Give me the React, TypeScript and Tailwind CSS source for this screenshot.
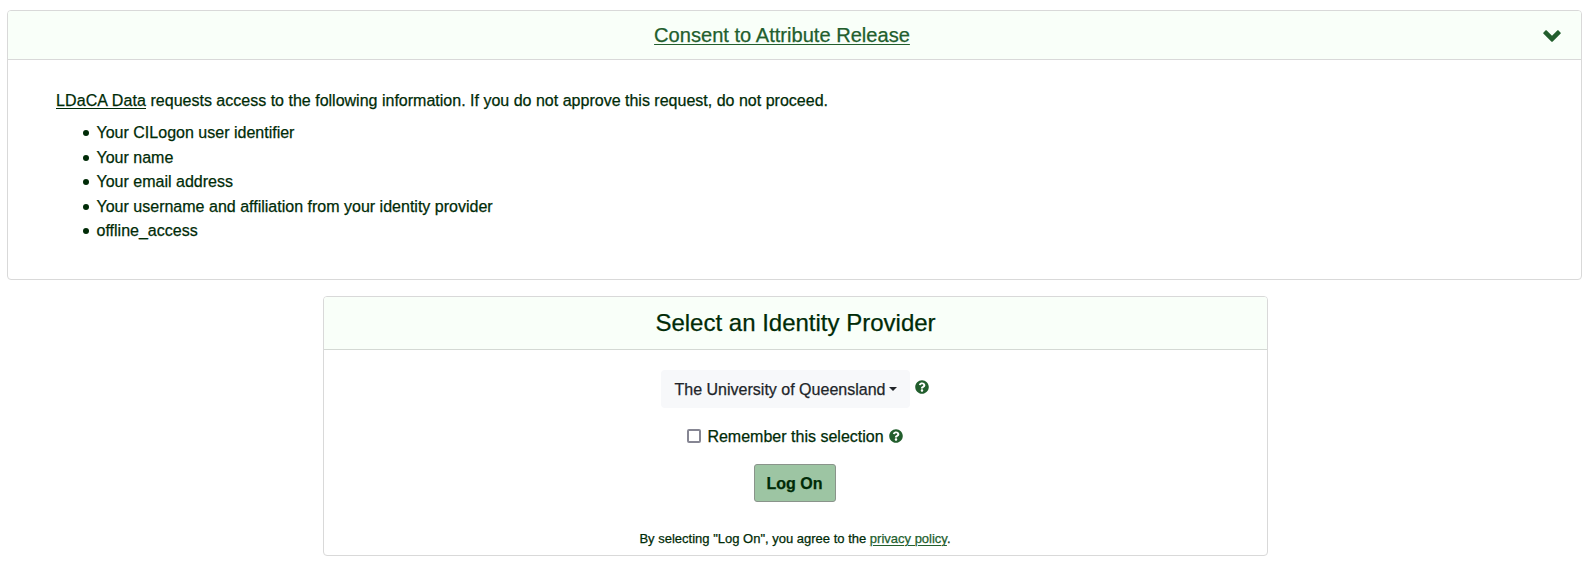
import { FaQuestionCircle } from "react-icons/fa";

const attributes = [
  "Your CILogon user identifier",
  "Your name",
  "Your email address",
  "Your username and affiliation from your identity provider",
  "offline_access",
];

function ChevronDown() {
  return (
    <svg viewBox="0 0 18 12" className="mt-px h-3 w-[18px]" fill="currentColor" aria-hidden="true">
      <path d="M8.5 11.7.3 3.5Q0 3.1.3 2.7L2.7.3Q3.1 0 3.5.3L9 5.8 14.5.3Q14.9 0 15.3.3L17.7 2.7Q18 3.1 17.7 3.5L9.5 11.7Q9 12 8.5 11.7Z" />
    </svg>
  );
}

function ConsentCard() {
  return (
    <section className="h-[270px] w-[1575px] rounded border border-[#d9d9d9] bg-white">
      <header className="flex h-[49px] items-center rounded-t-[3px] border-b border-[#d9d9d9] bg-[#f9fff9] pr-5 text-[#225e2d]">
        <div className="flex-1 pl-[13px] pt-px text-center">
          <a href="#" className="text-[20.1px] leading-6 underline decoration-1 underline-offset-2">
            Consent to Attribute Release
          </a>
        </div>
        <ChevronDown />
      </header>
      <div className="px-12 pt-7">
        <p className="leading-6">
          <a href="#" className="tracking-[0.1px] underline decoration-1 underline-offset-2">LDaCA Data</a>{" "}
          requests access to the following information. If you do not approve this request, do not proceed.
        </p>
        <ul className="mt-2 pl-[26.5px] leading-[24.5px]">
          {attributes.map((item) => (
            <li key={item} className="flex items-center">
              <span className="mr-2 mt-[2px] size-[6px] rounded-full bg-[#002b07]" />
              {item}
            </li>
          ))}
        </ul>
      </div>
    </section>
  );
}

function ProviderCard() {
  return (
    <section className="ml-[316px] mt-4 h-[260px] w-[945px] rounded border border-[#d9d9d9] bg-white">
      <header className="flex h-[53px] items-center justify-center rounded-t-[3px] border-b border-[#d4d9d4] bg-[#f9fff9]">
        <h1 className="text-[24px] leading-7">Select an Identity Provider</h1>
      </header>
      <div className="flex flex-col items-center pr-[2px] pt-5">
        <div className="flex items-start gap-[5px]">
          <button className="flex h-[38px] w-[249px] items-center justify-center rounded bg-[#f7f8fa] pl-[2px] text-[#212529]">
            The University of Queensland
            <span className="ml-1 border-x-4 border-t-4 border-x-transparent border-t-[#212529]" />
          </button>
          <FaQuestionCircle className="mt-[10px] size-[14px] text-[#225e2d]" />
        </div>
        <label className="mt-4 flex h-6 items-center pl-px">
          <input type="checkbox" className="size-[14px] appearance-none rounded-[2px] border-2 border-[#868693] bg-white" />
          <span className="ml-[6px]">Remember this selection</span>
          <FaQuestionCircle className="ml-[5px] size-[14px] text-[#225e2d]" />
        </label>
        <button className="mt-4 h-[38px] w-[82px] rounded-[3px] border border-[#8a948b] bg-[#9dc5a3] font-bold">
          Log On
        </button>
        <p className="mt-[27px] pl-px text-[13px] leading-5">
          By selecting "Log On", you agree to the{" "}
          <a href="#" className="text-[#225e2d] underline decoration-1 underline-offset-2">privacy policy</a>.
        </p>
      </div>
    </section>
  );
}

export default function App() {
  return (
    <main className="h-[567px] w-[1592px] overflow-hidden bg-white pl-[7px] pt-[10px] font-['Liberation_Sans',Arial,sans-serif] text-[16.03px] text-[#002b07] [-webkit-text-stroke:0.25px]">
      <ConsentCard />
      <ProviderCard />
    </main>
  );
}
